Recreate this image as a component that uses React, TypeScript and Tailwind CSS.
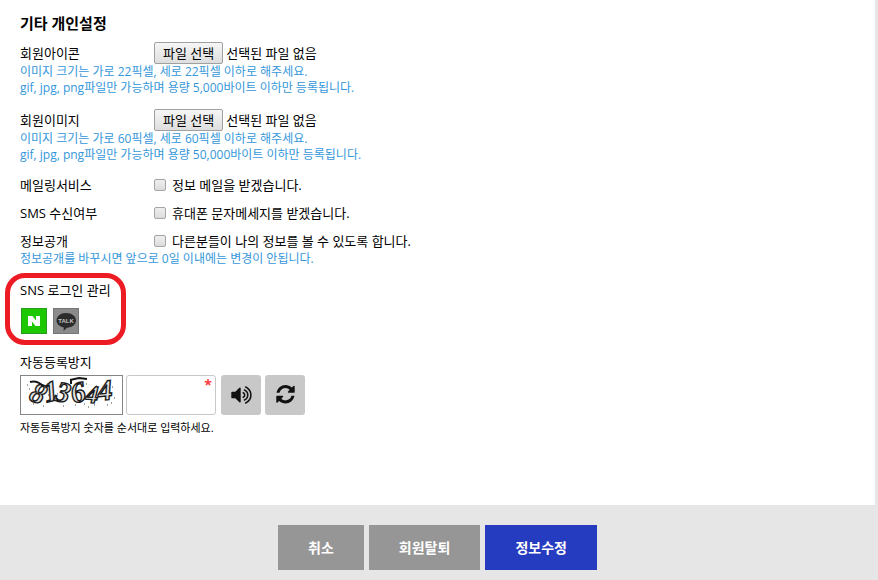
import React from 'react';

type FileRowProps = {
  id: string;
  label: string;
  hints: string[];
};

const FileRow: React.FC<FileRowProps> = ({ id, label, hints }) => (
  <div>
    <div className="flex items-center h-[22px]">
      <span className="w-[134px]">{label}</span>
      <label
        htmlFor={id}
        className="flex items-center h-[22px] px-2 mr-[3px] border border-[#a0a0a0] rounded-[2px] bg-linear-to-b from-[#f6f6f6] to-[#dedede]"
      >
        파일 선택
      </label>
      <input id={id} type="file" className="hidden" />
      <span>선택된 파일 없음</span>
    </div>
    {hints.map((hint) => (
      <p key={hint} className="text-[12px] leading-4 text-[#3497db]">{hint}</p>
    ))}
  </div>
);

type CheckRowProps = {
  id: string;
  label: string;
  text: string;
};

const CheckRow: React.FC<CheckRowProps> = ({ id, label, text }) => (
  <div className="flex items-center h-5">
    <span className="w-[134px]">{label}</span>
    <input
      id={id}
      type="checkbox"
      className="appearance-none w-3 h-3 mr-1.5 border border-[#a5a5a5] rounded-[2px] bg-linear-to-b from-[#efefef] to-[#dcdcdc] checked:bg-[#263cc0]"
    />
    <label htmlFor={id}>{text}</label>
  </div>
);

const captchaDigits = [
  { char: '8', x: 17, y: 27, angle: 24, size: 29 },
  { char: '1', x: 30, y: 25, angle: -14, size: 29 },
  { char: '3', x: 42, y: 26, angle: 14, size: 29 },
  { char: '6', x: 57, y: 26, angle: -14, size: 29 },
  { char: '4', x: 71, y: 27, angle: 4, size: 25 },
  { char: '4', x: 84, y: 24, angle: -6, size: 29 },
];

const CaptchaImage: React.FC = () => (
  <svg role="img" aria-label="자동등록방지 숫자" viewBox="0 0 101 38" className="w-[103px] h-10 mr-[3px] border border-[#858585] bg-white overflow-visible">
    {captchaDigits.map((d, i) => (
      <text
        key={i}
        x={d.x}
        y={d.y}
        fontSize={d.size}
        textAnchor="middle"
        transform={`rotate(${d.angle} ${d.x} ${d.y - 9})`}
        className="font-['Liberation_Serif',serif] font-bold italic"
        fill="#e4e4e4"
        stroke="#1c1c1c"
        strokeWidth="1.4"
      >
        {d.char}
      </text>
    ))}
    <path
      d="M9 6q7-2 13 4M49 4l9-2 8 1M50 4v4"
      stroke="#151515"
      strokeWidth="2"
      fill="none"
    />
    <path
      d="M6 9h1M8 13h1M26 8h1M27 19h1M36 18h1M42 30h1M51 14h1M54 29h1M65 8h1M63 28h1M67 31h1M75 10h1M91 11h1M93 22h1M90 27h1M12 28h1M22 30h1M73 29h1M86 29h1"
      stroke="#444"
      strokeWidth="1"
    />
  </svg>
);

const NaverIcon: React.FC = () => (
  <svg viewBox="0 0 26 26" className="w-[26px] h-[26px]" aria-hidden="true">
    <rect x="0.5" y="0.5" width="25" height="25" fill="#1ec800" stroke="#2a9c1b" />
    <path d="M7 8h4.500l3.500 4.500V8h4v10h-4.500L11 13.500V18H7z" fill="#fff" />
  </svg>
);

const TalkIcon: React.FC = () => (
  <svg viewBox="0 0 26 26" className="w-[26px] h-[26px]" aria-hidden="true">
    <rect x="0.5" y="0.5" width="25" height="25" fill="#8b8b8b" stroke="#767676" />
    <path d="M13 5c6 0 10 3.300 10 7.500S19 19.500 14 19.800L10.500 23l.3-3.600C6.500 18.700 3.500 16 3.500 12.500 3.500 8.300 7.500 5 13 5z" fill="#2b2b2b" />
    <text x="13" y="15" fontSize="6" textAnchor="middle" fill="#c4c4c4" className="font-['Liberation_Sans',sans-serif] font-bold">
      TALK
    </text>
  </svg>
);

const VolumeIcon: React.FC = () => (
  <svg viewBox="0 0 1664 1792" className="w-[21px] h-[22px]" fill="#111" aria-hidden="true">
    <path d="M768 352v1088q0 26-19 45t-45 19-45-19l-333-333h-262q-26 0-45-19t-19-45v-384q0-26 19-45t45-19h262l333-333q19-19 45-19t45 19 19 45zm384 544q0 76-42.5 141.5t-112.5 93.5q-10 5-25 5-26 0-45-18.5t-19-45.5q0-21 12-35.5t29-25 34-23 29-36 12-56.5-12-56.5-29-36-34-23-29-25-12-35.5q0-27 19-45.5t45-18.5q15 0 25 5 70 27 112.5 93t42.5 142zm256 0q0 153-85 282.5t-225 188.5q-13 5-25 5-27 0-46-19t-19-45q0-39 39-59 56-29 76-44 74-54 115.5-135.5t41.5-173.5-41.5-173.5-115.5-135.5q-20-15-76-44-39-20-39-59 0-26 19-45t45-19q13 0 26 5 140 59 225 188.5t85 282.5zm256 0q0 230-127 422.5t-338 283.5q-13 5-26 5-26 0-45-19t-19-45q0-36 39-59 7-4 22.5-10.5t22.5-10.5q46-25 82-51 123-91 192-227t69-289-69-289-192-227q-36-26-82-51-7-4-22.5-10.5t-22.5-10.5q-39-23-39-59 0-26 19-45t45-19q13 0 26 5 211 91 338 283.5t127 422.5z" />
  </svg>
);

const RefreshIcon: React.FC = () => (
  <svg viewBox="0 0 1536 1664" className="w-[19px] h-5" fill="#111" aria-hidden="true">
    <path d="M1511 928q0 5-1 7-64 268-268 434.500t-478 166.500q-146 0-282.500-55t-243.500-157l-129 129q-19 19-45 19t-45-19-19-45v-448q0-26 19-45t45-19h448q26 0 45 19t19 45-19 45l-137 137q71 66 161 102t187 36q134 0 250-65t186-179q11-17 53-117 8-23 30-23h192q13 0 22.500 9.500t9.500 22.500zm25-800v448q0 26-19 45t-45 19h-448q-26 0-45-19t-19-45 19-45l138-138q-148-137-349-137-134 0-250 65t-186 179q-11 17-53 117-8 23-30 23h-199q-13 0-22.500-9.500t-9.500-22.500v-7q65-268 270-434.500t480-166.500q146 0 284 55.500t245 156.500l130-129q19-19 45-19t45 19 19 45z" />
  </svg>
);

const App: React.FC = () => {
  return (
    <form className="min-h-screen bg-[#e6e6e6] pr-[3px] text-[13px] leading-5 text-black font-['Open_Sans','Noto_Sans_CJK_KR',sans-serif]">
      {/* Personal settings */}
      <section className="bg-white pt-[13px] px-5 pb-[70px]">
        <h2 className="text-[15px] leading-5 font-bold mb-[9px]">기타 개인설정</h2>

        <div className="flex flex-col gap-[13px] mb-3">
          <FileRow
            id="member-icon"
            label="회원아이콘"
            hints={[
              '이미지 크기는 가로 22픽셀, 세로 22픽셀 이하로 해주세요.',
              'gif, jpg, png파일만 가능하며 용량 5,000바이트 이하만 등록됩니다.',
            ]}
          />
          <FileRow
            id="member-image"
            label="회원이미지"
            hints={[
              '이미지 크기는 가로 60픽셀, 세로 60픽셀 이하로 해주세요.',
              'gif, jpg, png파일만 가능하며 용량 50,000바이트 이하만 등록됩니다.',
            ]}
          />
        </div>

        <div className="flex flex-col gap-2">
          <CheckRow id="mailing" label="메일링서비스" text="정보 메일을 받겠습니다." />
          <CheckRow id="sms" label="SMS 수신여부" text="휴대폰 문자메세지를 받겠습니다." />
          <CheckRow id="open" label="정보공개" text="다른분들이 나의 정보를 볼 수 있도록 합니다." />
        </div>
        <p className="text-[12px] leading-4 text-[#3497db]">정보공개를 바꾸시면 앞으로 0일 이내에는 변경이 안됩니다.</p>

        {/* SNS login */}
        <div className="relative w-fit mt-[13px] mb-[18px]">
          <h3>SNS 로그인 관리</h3>
          <div className="flex gap-1.5 mt-2 pl-px">
            <button type="button" aria-label="네이버"><NaverIcon /></button>
            <button type="button" aria-label="카카오톡"><TalkIcon /></button>
          </div>
          <div className="absolute -top-[7px] -bottom-[11px] -left-[15px] w-[121px] border-5 border-[#ed1c24] rounded-[20px] pointer-events-none" />
        </div>

        {/* Captcha */}
        <label htmlFor="captcha" className="block mb-[3px]">자동등록방지</label>
        <div className="flex items-center">
          <CaptchaImage />
          <div className="relative mr-[5px]">
            <input id="captcha" type="text" required className="block w-[90px] h-10 px-2 border border-[#c8c8c8] rounded-[3px] bg-white" />
            <span className="absolute top-0 right-1 text-[14px] leading-5 font-bold text-[#ff3b3b]">*</span>
          </div>
          <button type="button" aria-label="음성듣기" className="flex items-center justify-center w-10 h-10 mr-1 rounded-[3px] bg-[#c8c8c8]">
            <VolumeIcon />
          </button>
          <button type="button" aria-label="새로고침" className="flex items-center justify-center w-10 h-10 rounded-[3px] bg-[#c8c8c8]">
            <RefreshIcon />
          </button>
        </div>
        <p className="mt-[5px] text-[11px] leading-[15px]">자동등록방지 숫자를 순서대로 입력하세요.</p>
      </section>

      {/* Actions */}
      <div className="flex justify-center gap-[5px] pt-5 pb-2.5 text-[14px] font-bold text-white">
        <button type="button" className="h-[45px] px-[30px] bg-[#969696]">취소</button>
        <button type="button" className="h-[45px] px-[30px] bg-[#969696]">회원탈퇴</button>
        <button type="submit" className="h-[45px] px-[30px] bg-[#263cc0]">정보수정</button>
      </div>
    </form>
  );
};

export default App;
